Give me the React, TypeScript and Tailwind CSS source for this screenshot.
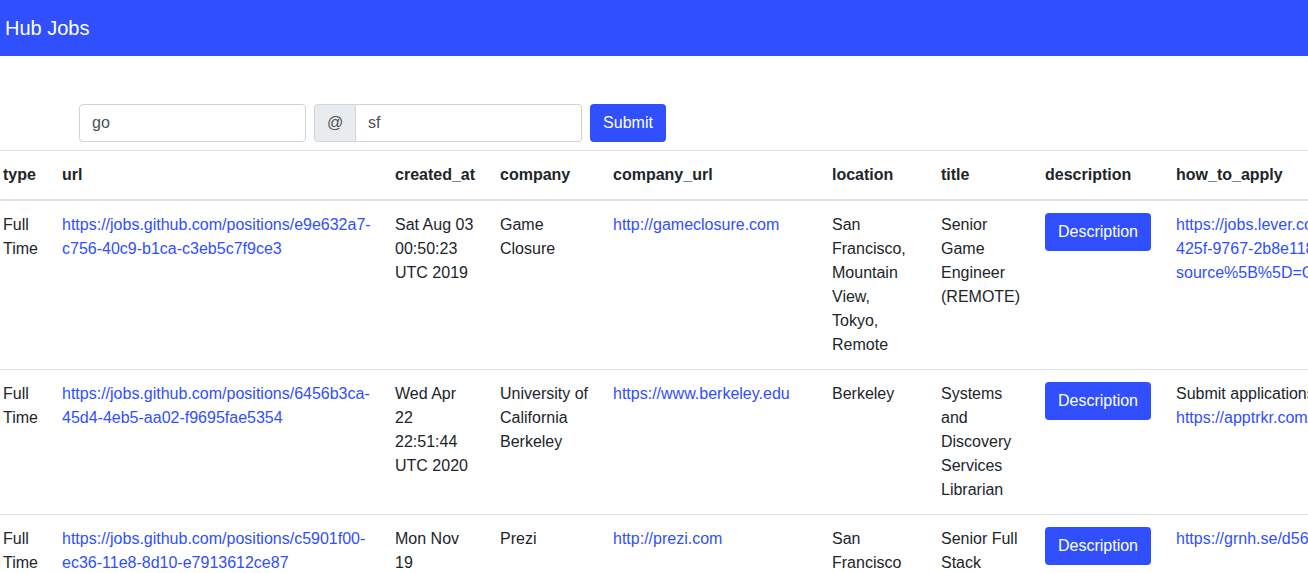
import React from "react";

type Job = {
  type: string;
  url: string;
  created_at: string;
  company: string;
  company_url: string;
  location: string;
  title: string;
  how_to_apply: React.ReactNode;
};

const linkCls = "text-[#304ffe] no-underline";

const jobs: Job[] = [
  {
    type: "Full Time",
    url: "https://jobs.github.com/positions/e9e632a7-c756-40c9-b1ca-c3eb5c7f9ce3",
    created_at: "Sat Aug 03 00:50:23 UTC 2019",
    company: "Game Closure",
    company_url: "http://gameclosure.com",
    location: "San Francisco, Mountain View, Tokyo, Remote",
    title: "Senior Game Engineer (REMOTE)",
    how_to_apply: (
      <a className={linkCls} href="#">
        https://jobs.lever.co/gameclosure/8c3a1f02-b6d4-425f-9767-2b8e1186d0a4?lever-source%5B%5D=GitHub
      </a>
    ),
  },
  {
    type: "Full Time",
    url: "https://jobs.github.com/positions/6456b3ca-45d4-4eb5-aa02-f9695fae5354",
    created_at: "Wed Apr 22 22:51:44 UTC 2020",
    company: "University of California Berkeley",
    company_url: "https://www.berkeley.edu",
    location: "Berkeley",
    title: "Systems and Discovery Services Librarian",
    how_to_apply: (
      <>
        Submit applications online:{" "}
        <a className={linkCls} href="#">
          https://apptrkr.com/1911583
        </a>
      </>
    ),
  },
  {
    type: "Full Time",
    url: "https://jobs.github.com/positions/c5901f00-ec36-11e8-8d10-e7913612ce87",
    created_at: "Mon Nov 19 13:24:08 UTC 2018",
    company: "Prezi",
    company_url: "http://prezi.com",
    location: "San Francisco",
    title: "Senior Full Stack Engineer",
    how_to_apply: (
      <a className={linkCls} href="#">
        https://grnh.se/d56a0e5a1
      </a>
    ),
  },
];

const headers = [
  "type",
  "url",
  "created_at",
  "company",
  "company_url",
  "location",
  "title",
  "description",
  "how_to_apply",
];

export default function App() {
  return (
    <div className="w-[1308px] overflow-hidden bg-white text-base leading-6 text-[#212529] font-['Liberation_Sans',Arial,sans-serif]">
      <nav className="flex h-14 items-center bg-[#304ffe] px-[5px]">
        <span className="text-xl text-white">Hub Jobs</span>
      </nav>

      <form className="mt-12 flex items-center gap-2 pl-[79px]" onSubmit={(e) => e.preventDefault()}>
        <input
          defaultValue="go"
          className="h-[38px] w-[227px] rounded border border-[#ced4da] px-3 text-[#495057] outline-none"
        />
        <div className="flex h-[38px] w-[268px]">
          <span className="flex w-[42px] shrink-0 items-center justify-center rounded-l border border-[#ced4da] bg-[#e9ecef] text-[#495057]">
            @
          </span>
          <input
            defaultValue="sf"
            className="h-[38px] min-w-0 flex-1 rounded-r border border-l-0 border-[#ced4da] px-3 text-[#495057] outline-none"
          />
        </div>
        <button className="h-[38px] w-[76px] rounded bg-[#304ffe] text-white">Submit</button>
      </form>

      <table className="ml-[-9px] mt-2 w-[1567px] table-fixed border-collapse text-left">
        <colgroup>
          <col className="w-[59px]" />
          <col className="w-[333px]" />
          <col className="w-[105px]" />
          <col className="w-[113px]" />
          <col className="w-[219px]" />
          <col className="w-[109px]" />
          <col className="w-[104px]" />
          <col className="w-[131px]" />
          <col className="w-[394px]" />
        </colgroup>
        <thead>
          <tr>
            {headers.map((h) => (
              <th
                key={h}
                className="border-t border-b-2 border-[#dee2e6] p-3 align-bottom font-bold"
              >
                {h}
              </th>
            ))}
          </tr>
        </thead>
        <tbody>
          {jobs.map((j) => (
            <tr key={j.url}>
              <td className="border-t border-[#dee2e6] p-3 align-top">{j.type}</td>
              <td className="border-t border-[#dee2e6] p-3 align-top">
                <a className={linkCls} href="#">
                  {j.url}
                </a>
              </td>
              <td className="border-t border-[#dee2e6] p-3 align-top">{j.created_at}</td>
              <td className="border-t border-[#dee2e6] p-3 align-top">{j.company}</td>
              <td className="border-t border-[#dee2e6] p-3 align-top">
                <a className={linkCls} href="#">
                  {j.company_url}
                </a>
              </td>
              <td className="border-t border-[#dee2e6] p-3 align-top">{j.location}</td>
              <td className="border-t border-[#dee2e6] p-3 align-top">{j.title}</td>
              <td className="border-t border-[#dee2e6] p-3 align-top">
                <button className="h-[38px] w-[106px] rounded bg-[#304ffe] text-white">
                  Description
                </button>
              </td>
              <td className="border-t border-[#dee2e6] p-3 align-top">{j.how_to_apply}</td>
            </tr>
          ))}
        </tbody>
      </table>
    </div>
  );
}
